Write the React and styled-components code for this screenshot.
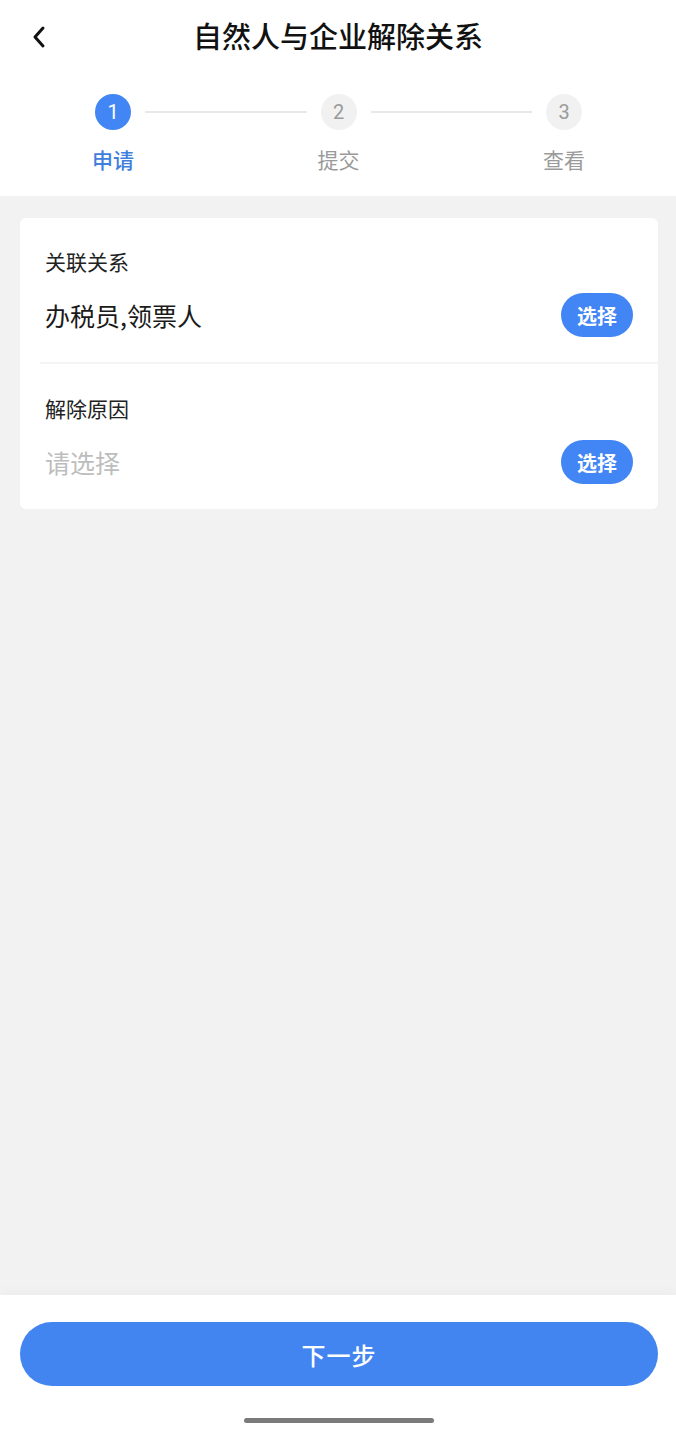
import React from 'react'
import styled, { createGlobalStyle } from 'styled-components';

const GlobalStyle = createGlobalStyle`
  html, body {
    margin: 0;
    padding: 0;
    background: #f2f2f2;
  }
  body {
    font-family: "Noto Sans CJK SC", "Noto Sans", sans-serif;
  }
`;

const Page = styled.div`
  min-height: 100vh;
  display: flex;
  flex-direction: column;
`;

const Header = styled.div`
  background: #fff;
  padding-bottom: 23px;
`;

const TopBar = styled.div`
  height: 75px;
  box-sizing: border-box;
  padding-bottom: 6px;
  display: flex;
  align-items: center;
  justify-content: center;
  position: relative;
`;

const BackButton = styled.div`
  position: absolute;
  left: 27px;
  top: 25px;
  width: 24px;
  height: 24px;
  display: flex;
  align-items: center;
  justify-content: center;
`;

const Title = styled.div`
  font-size: 29px;
  font-weight: 500;
  color: #111;
`;

const Stepper = styled.div`
  display: flex;
  align-items: flex-start;
  padding: 19px 94px 0 95px;
`;

const Step = styled.div`
  width: 36px;
  display: flex;
  flex-direction: column;
  align-items: center;
  gap: 15px;
`;

const Circle = styled.div`
  width: 36px;
  height: 36px;
  border-radius: 50%;
  display: flex;
  align-items: center;
  justify-content: center;
  font-family: "Roboto", "Noto Sans", sans-serif;
  font-size: 20px;
  background: ${({ $active }) => ($active ? '#4285f4' : '#f1f1f1')};
  color: ${({ $active }) => ($active ? '#fff' : '#9a9a9a')};
`;

const StepLabel = styled.div`
  white-space: nowrap;
  font-size: 21px;
  line-height: 28px;
  font-weight: ${({ $active }) => ($active ? 500 : 400)};
  color: ${({ $active }) => ($active ? '#3f80dc' : '#9a9a9a')};
`;

const Line = styled.div`
  flex: 1;
  height: 2px;
  margin: 17px 14px 0;
  background: #e8e8e8;
`;

const Body = styled.div`
  flex: 1;
  background: #f2f2f2;
  padding: 22px 18px 0 20px;
`;

const Card = styled.div`
  background: #fff;
  border-radius: 6px;
`;

const Field = styled.div`
  padding: ${({ $first }) => ($first ? '28px' : '29px')} 25px 25px;
  display: flex;
  flex-direction: column;
  gap: 17px;
`;

const Label = styled.div`
  font-size: 21px;
  line-height: 30px;
  color: #222;
`;

const ValueRow = styled.div`
  display: flex;
  align-items: center;
  justify-content: space-between;
  height: 44px;
`;

const Value = styled.div`
  font-size: 25px;
  color: ${({ $placeholder }) => ($placeholder ? '#bdbdbd' : '#1a1a1a')};
`;

const SelectButton = styled.button`
  width: 72px;
  height: 44px;
  border: none;
  border-radius: 22px;
  background: #4285f4;
  color: #fff;
  font-family: inherit;
  font-size: 20px;
  font-weight: 700;
  padding: 0;
`;

const Divider = styled.div`
  height: 2px;
  margin-left: 20px;
  background: #f4f4f4;
`;

const Footer = styled.div`
  background: #fff;
  height: 139px;
  padding: 27px 18px 0 20px;
  box-sizing: border-box;
  display: flex;
  flex-direction: column;
  align-items: center;
  box-shadow: 0 -6px 10px rgba(0, 0, 0, 0.02);
`;

const NextButton = styled.button`
  width: 100%;
  height: 64px;
  border: none;
  border-radius: 32px;
  background: #4285f0;
  color: #fff;
  font-family: inherit;
  font-size: 24px;
  font-weight: 500;
  letter-spacing: 1px;
`;

const HomeIndicator = styled.div`
  width: 190px;
  height: 5px;
  border-radius: 3px;
  background: #7a7a7a;
  margin-top: 32px;
`;

const steps = [
  { n: 1, label: '申请', active: true },
  { n: 2, label: '提交' },
  { n: 3, label: '查看' },
];

function App() {
  return (
    <Page>
      <GlobalStyle />
      <Header>
        <TopBar>
          <BackButton>
            <svg width="16" height="24" viewBox="0 0 16 24">
              <polyline points="12,3 4,12 12,21" fill="none" stroke="#111" strokeWidth="3" strokeLinecap="round" strokeLinejoin="round" />
            </svg>
          </BackButton>
          <Title>自然人与企业解除关系</Title>
        </TopBar>
        <Stepper>
          {steps.map((s, i) => (
            <React.Fragment key={s.n}>
              {i > 0 && <Line />}
              <Step>
                <Circle $active={s.active}>{s.n}</Circle>
                <StepLabel $active={s.active}>{s.label}</StepLabel>
              </Step>
            </React.Fragment>
          ))}
        </Stepper>
      </Header>
      <Body>
        <Card>
          <Field $first>
            <Label>关联关系</Label>
            <ValueRow>
              <Value>办税员,领票人</Value>
              <SelectButton>选择</SelectButton>
            </ValueRow>
          </Field>
          <Divider />
          <Field>
            <Label>解除原因</Label>
            <ValueRow>
              <Value $placeholder>请选择</Value>
              <SelectButton>选择</SelectButton>
            </ValueRow>
          </Field>
        </Card>
      </Body>
      <Footer>
        <NextButton>下一步</NextButton>
        <HomeIndicator />
      </Footer>
    </Page>
  )
}

export default App
